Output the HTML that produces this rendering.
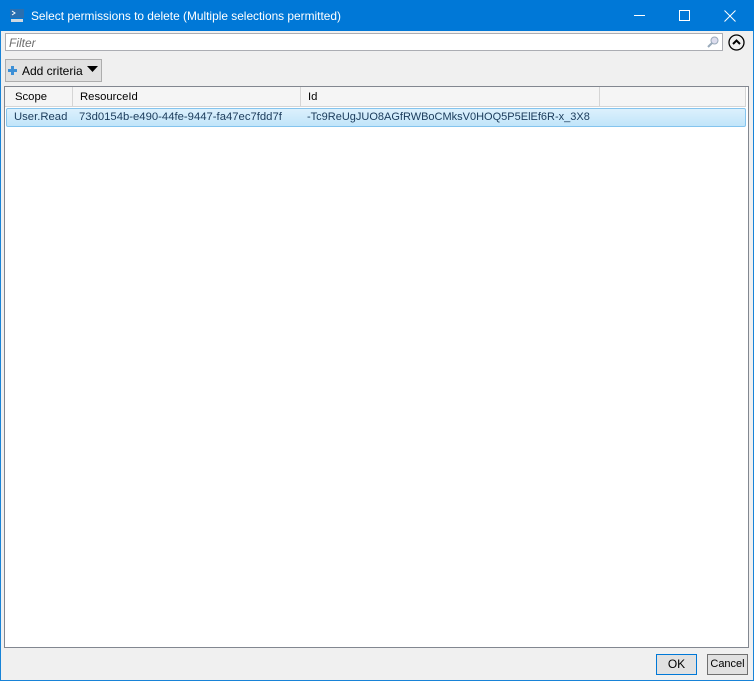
<!DOCTYPE html>
<html><head><style>
*{margin:0;padding:0;box-sizing:border-box}
body{width:754px;height:681px;overflow:hidden;background:#f0f0f0;font-family:"Liberation Sans",sans-serif;font-size:12px;color:#000;position:relative}
.frame{position:absolute;left:0;top:0;width:754px;height:681px;border:1px solid #1883d7}
.title{position:absolute;left:0;top:0;width:754px;height:31px;background:#0078d7;color:#fff;font-size:12px}
.abs{position:absolute}
.r{font-size:11.3px}
</style></head><body>
<div class="frame"></div>
<div class="title">
 <svg class="abs" style="left:9px;top:8px" width="16" height="16"><rect x="1" y="1" width="14" height="9" fill="#2a6fb0"/><path d="M3 3l3 2-3 2" stroke="#fff" fill="none"/><rect x="2" y="11" width="12" height="3" fill="#cfd8e0"/></svg>
 <div class="abs" style="left:31px;top:9px;font-size:11.9px">Select permissions to delete (Multiple selections permitted)</div>
 <div class="abs" style="left:634px;top:15px;width:11px;height:1px;background:#fff"></div>
 <div class="abs" style="left:679px;top:10px;width:11px;height:11px;border:1px solid #fff"></div>
 <svg class="abs" style="left:724px;top:10px" width="12" height="12"><path d="M0.5 0.5L11.5 11.5M11.5 0.5L0.5 11.5" stroke="#fff"/></svg>
</div>
<div class="abs" style="left:5px;top:33px;width:718px;height:18px;background:#fff;border:1px solid #abadb3"></div>
<div class="abs" style="left:9px;top:36px;font-style:italic;color:#6d6d6d">Filter</div>
<svg class="abs" style="left:706px;top:35px" width="14" height="14"><circle cx="8.5" cy="5.5" r="3.5" fill="#dde" stroke="#9ab"/><path d="M6 8L2 12" stroke="#9ab" stroke-width="2"/></svg>
<svg class="abs" style="left:728px;top:34px" width="17" height="17"><circle cx="8.5" cy="8.5" r="7.5" fill="none" stroke="#000" stroke-width="1.3"/><path d="M5 10l3.5-3.5 3.5 3.5" fill="none" stroke="#000" stroke-width="2"/></svg>
<div class="abs" style="left:5px;top:59px;width:97px;height:23px;background:#e1e1e1;border:1px solid #adadad"></div>
<svg class="abs" style="left:7px;top:65px" width="11" height="11"><path d="M5.5 1v9M1 5.5h9" stroke="#3c8fd6" stroke-width="3"/></svg>
<div class="abs" style="left:22px;top:64px">Add criteria</div>
<svg class="abs" style="left:87px;top:66px" width="11" height="7"><path d="M0 0h11L5.5 6z" fill="#000"/></svg>
<div class="abs" style="left:4px;top:86px;width:745px;height:562px;background:#fff;border:1px solid #828790"></div>
<div class="abs" style="left:5px;top:87px;width:741px;height:20px;background:#f5f5f5;border-bottom:1px solid #d5d5d5"></div>
<div class="abs" style="left:72px;top:87px;width:1px;height:19px;background:#d5d5d5"></div>
<div class="abs" style="left:300px;top:87px;width:1px;height:19px;background:#d5d5d5"></div>
<div class="abs" style="left:599px;top:87px;width:1px;height:19px;background:#d5d5d5"></div>
<div class="abs" style="left:745px;top:87px;width:1px;height:19px;background:#d5d5d5"></div>
<div class="abs r" style="left:15px;top:91px">Scope</div>
<div class="abs r" style="left:80px;top:91px">ResourceId</div>
<div class="abs r" style="left:308px;top:91px">Id</div>
<div class="abs" style="left:6px;top:108px;width:740px;height:19px;border:1px solid #84c4ee;border-radius:2px;background:linear-gradient(#dcf0fc,#c1e5fa)"></div>
<div class="abs r" style="left:14px;top:111px;color:#1a3a5a">User.Read</div>
<div class="abs r" style="left:79px;top:111px;color:#1a3a5a">73d0154b-e490-44fe-9447-fa47ec7fdd7f</div>
<div class="abs r" style="left:307px;top:111px;color:#1a3a5a;font-size:11px">-Tc9ReUgJUO8AGfRWBoCMksV0HOQ5P5ElEf6R-x_3X8</div>
<div class="abs" style="left:656px;top:654px;width:41px;height:21px;background:#e1e1e1;border:1px solid #0078d7;text-align:center;line-height:19px">OK</div>
<div class="abs" style="left:707px;top:654px;width:41px;height:21px;background:#e1e1e1;border:1px solid #707070;text-align:center;line-height:19px;font-size:11px">Cancel</div>
</body></html>
